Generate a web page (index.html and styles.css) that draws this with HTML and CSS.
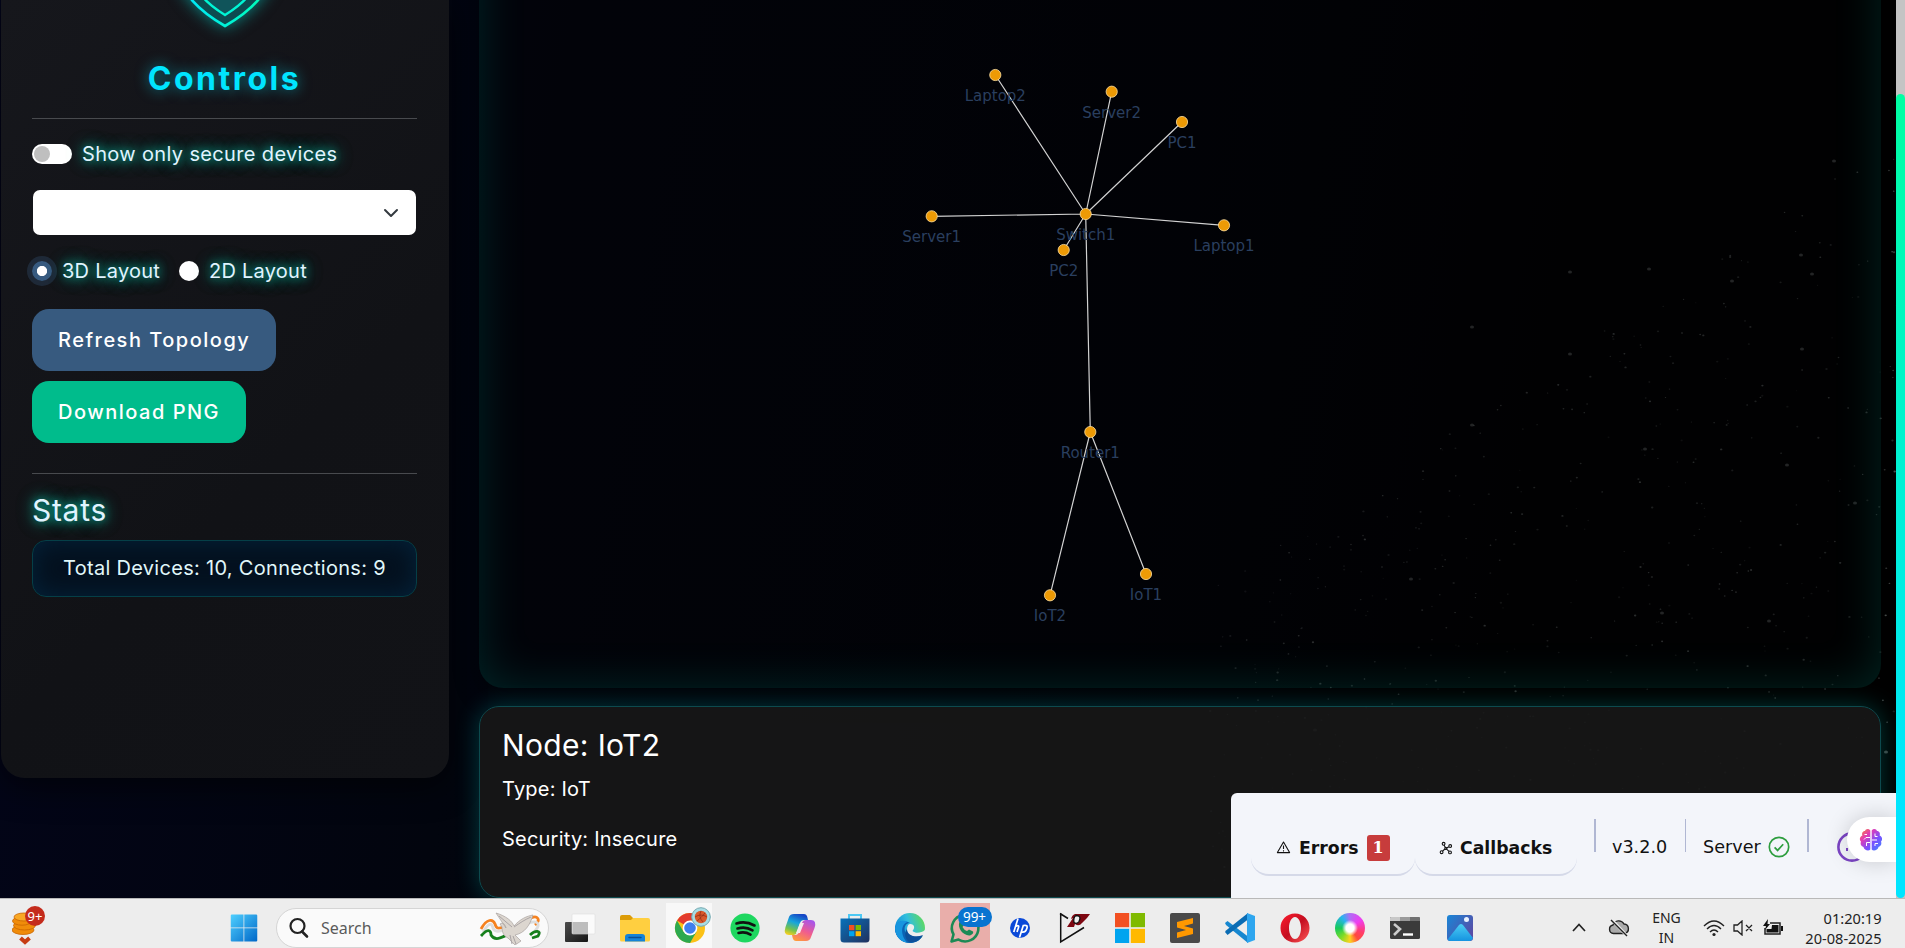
FILE: index.html
```html
<!DOCTYPE html>
<html lang="en">
<head>
<meta charset="utf-8">
<title>Network Topology</title>
<link rel="stylesheet" href="styles.css">
</head>
<body>
<div class="desktop">
  <div class="viewport">
    <svg class="stars" id="stars" viewBox="0 0 1905 898"></svg>

    <aside class="sidebar">
      <svg class="shield" width="100" height="62" viewBox="0 0 100 62">
        <defs><linearGradient id="shieldStroke" x1="0" x2="1"><stop offset="0" stop-color="#00e5ff"/><stop offset="1" stop-color="#00ffb0"/></linearGradient></defs>
        <path d="M4 -40 V-20 C5 0 24 19 50 34 C76 19 95 0 96 -20 V-40" transform="translate(0 -8)" fill="#0d4b50" stroke="url(#shieldStroke)" stroke-width="2.6"/>
        <path d="M14 -44 V-28 C18 -10 32 4 50 15 C68 4 82 -10 86 -28 V-44" fill="#10545a" stroke="#00f5d4" stroke-width="2.4"/>
      </svg>
      <h1 class="title"><span class="t-controls">Controls</span></h1>
      <hr class="rule">
      <label class="switch-row"><span class="switch"><span class="knob"></span></span><span class="glow t-switch">Show only secure devices</span></label>
      <div class="select">
        <svg width="16" height="16" viewBox="0 0 16 16"><path d="M2 5l6 6 6-6" fill="none" stroke="#343a40" stroke-width="2" stroke-linecap="round" stroke-linejoin="round"/></svg>
      </div>
      <div class="radios">
        <label class="radio-row first"><span class="radio checked"></span><span class="glow t-layout">3D Layout</span></label>
        <label class="radio-row"><span class="radio"></span><span class="glow t-layout">2D Layout</span></label>
      </div>
      <div class="btn refresh"><span class="t-refresh">Refresh Topology</span></div>
      <div class="btn download"><span class="t-download">Download PNG</span></div>
      <hr class="rule second">
      <h2 class="stats-title glow">Stats</h2>
      <div class="stats-box"><span class="t-total">Total Devices: 10, Connections: 9</span></div>
    </aside>

    <main class="content">
      <section class="graph-panel">
        <svg class="graph" width="1402" height="687" viewBox="479 0 1402 687">
          <g class="edges">
            <path d="M1085.7 214L995.3 75M1085.7 214L1111.7 91.7M1085.7 214L1182 122M1085.7 214L931.7 216.3M1085.7 214L1224 225.3M1085.7 214L1063.7 250M1085.7 214L1090.3 432M1090.3 432L1146 574M1090.3 432L1050 595.3"/>
          </g>
          <g class="labels">
            <text x="995.3" y="101">Laptop2</text><text x="1111.7" y="118">Server2</text><text x="1182" y="148">PC1</text>
            <text x="931.7" y="242">Server1</text><text x="1085.7" y="240">Switch1</text><text x="1224" y="251">Laptop1</text>
            <text x="1063.7" y="276">PC2</text><text x="1090.3" y="458">Router1</text><text x="1146" y="600">IoT1</text><text x="1050" y="621">IoT2</text>
          </g>
          <g class="nodes">
            <circle cx="995.3" cy="75" r="5.6"/><circle cx="1111.7" cy="91.7" r="5.6"/><circle cx="1182" cy="122" r="5.6"/>
            <circle cx="931.7" cy="216.3" r="5.6"/><circle cx="1085.7" cy="214" r="5.6"/><circle cx="1224" cy="225.3" r="5.6"/>
            <circle cx="1063.7" cy="250" r="5.6"/><circle cx="1090.3" cy="432" r="5.6"/><circle cx="1146" cy="574" r="5.6"/><circle cx="1050" cy="595.3" r="5.6"/>
          </g>
        </svg>
      </section>
      <section class="node-panel">
        <h2 class="t-node">Node: IoT2</h2>
        <p class="t-info">Type: IoT</p>
        <p class="t-info">Security: Insecure</p>
      </section>
    </main>

    <div class="scrollbar"><div class="thumb"></div></div>

    <div class="devtools">
      <div class="tab errors">
        <svg width="15" height="15" viewBox="0 0 15 15"><path d="M7.5 2L13.6 12.6H1.4Z" fill="none" stroke="#111" stroke-width="1.1" stroke-linejoin="round"/><path d="M7.5 5.5v3.6M7.5 10.2v1.2" stroke="#111" stroke-width="1.1"/></svg>
        <span>Errors</span><span class="count">1</span>
      </div>
      <div class="tab callbacks">
        <svg width="14" height="14" viewBox="0 0 14 14" fill="none" stroke="#111" stroke-width="1.1"><circle cx="4.600" cy="2.800" r="1.400"/><circle cx="11.200" cy="5" r="1.400"/><circle cx="2.600" cy="11.200" r="1.400"/><circle cx="11" cy="11.400" r="1.400"/><circle cx="6.800" cy="7.400" r="1"/><path d="M5.100 4.100L6.300 6.400M7.800 7l2-1.300M5.900 8L3.600 10.200M7.600 8.100l2.400 2.300"/></svg>
        <span>Callbacks</span>
      </div>
      <span class="sep s1"></span>
      <span class="version">v3.2.0</span>
      <span class="sep s2"></span>
      <span class="server">Server</span>
      <svg class="ok" width="22" height="22" viewBox="0 0 22 22"><circle cx="11" cy="11" r="9.7" fill="none" stroke="#2e9e3f" stroke-width="1.7"/><path d="M6.6 11.4l3 3 5.6-6.2" fill="none" stroke="#2e9e3f" stroke-width="1.7"/></svg>
      <span class="sep s3"></span>
      <svg class="dash" width="30" height="30" viewBox="0 0 30 30"><circle cx="15" cy="15" r="13.6" fill="none" stroke="#7b44c4" stroke-width="2.6"/><path d="M10 19v-3M12 8v3" stroke="#7b44c4" stroke-width="2"/></svg>
      <div class="brain">
        <svg width="24" height="24" viewBox="0 0 24 24">
          <defs><linearGradient id="brainFill" x1="0" y1="0" x2="1" y2="1"><stop offset="0" stop-color="#ff8a2a"/><stop offset=".3" stop-color="#e23cb4"/><stop offset=".62" stop-color="#7a50ff"/><stop offset="1" stop-color="#3c8cff"/></linearGradient></defs>
          <path fill="url(#brainFill)" d="M11.3 2.5C10 .3 6.500.5 6 3 3.500 3 2.500 5.500 3.400 7.500.5 8.500.2 12 2 13.600 1 16 2.200 18.500 4.500 18.900 5 22 9.500 23.800 11.300 21.500ZM12.700 2.500C14 .3 17.500.5 18 3c2.500 0 3.500 2.500 2.600 4.500 2.900 1 3.200 4.500 1.400 6.100 1 2.400-.2 4.900-2.500 5.300-.5 3.100-5 4.900-6.800 2.600Z"/>
          <path d="M8 6.500H5.500M11 9.500H7L5 11.500M11 14.500H7.500V18M16 5.500V8.500H18.500M13 12H18M16 18V15.500H19" fill="none" stroke="#fff" stroke-width="1"/>
        </svg>
      </div>
    </div>
  </div>

  <footer class="taskbar">
    <div class="widgets">
      <svg width="34" height="40" viewBox="0 0 34 40">
        <g fill="#f08c0a" stroke="#c96500" stroke-width=".8"><ellipse cx="11" cy="24" rx="11" ry="4.500"/><ellipse cx="12.500" cy="19.500" rx="11" ry="4.500"/><ellipse cx="10" cy="15" rx="9.500" ry="4.200"/><ellipse cx="12" cy="11" rx="10" ry="4" fill="#f9a825"/></g>
        <path d="M8.500 32l4.500 4 4.500-4" fill="none" stroke="#c63d13" stroke-width="4"/>
        <circle cx="23" cy="10" r="10" fill="#c42b1c"/>
        <text x="23" y="14.500" text-anchor="middle" font-size="13" fill="#fff">9+</text>
      </svg>
    </div>
    <svg class="start" width="30" height="30" viewBox="0 0 30 30"><defs><linearGradient id="winFill" x1="0" y1="0" x2="1" y2="1"><stop offset="0" stop-color="#4fd0ff"/><stop offset="1" stop-color="#0067c8"/></linearGradient></defs><path fill="url(#winFill)" d="M2 .5h12.500v14H.8V1.700A1.200 1.200 0 0 1 2 .5ZM15.300.5H28a1.200 1.200 0 0 1 1.200 1.200V14.500H15.300ZM.8 15.300H14.500V29.500H2A1.200 1.200 0 0 1 .8 28.300ZM15.300 15.300H29.200V28.300A1.200 1.200 0 0 1 28 29.500H15.300Z"/></svg>
    <div class="search">
      <svg width="20" height="22" viewBox="0 0 20 22"><circle cx="8.500" cy="9" r="7" fill="none" stroke="#222" stroke-width="2.200"/><path d="M13 14.500l5 5" stroke="#222" stroke-width="2.600" stroke-linecap="round"/></svg>
      <span>Search</span>
      <svg class="dove" width="64" height="34" viewBox="0 0 64 34">
        <g fill="none" stroke-width="2.800"><path d="M2 18C8 7 14 8 16 13C18 20 22 16 28 16M50 8c9-5 12 1 6 6" stroke="#f58220"/><path d="M4 21C10 11 13 12 14 17C16 23 24 19 30 18M50 12c9-3 12 1 6 8l6 2" stroke="#ddd"/><path d="M2 25C8 18 12 18 12 24C16 31 24 26 30 23M51 24c5-5 12-5 8 1l-6 2" stroke="#16801c"/></g>
        <path d="M21 13c3-2 5 0 6 4L17 2c10 3 16 8 18 13C41 8 48 5 54 4c-3 10-8 18-18 20l6 6-6 4-7-7c-5-2-6-7-6-11Z" fill="#dcd6cf" stroke="#a9a29f" stroke-width=".7"/><path d="M35 16c6-4 10-7 17-10M20 5l13 11M34 25l3 8M31 24l2 9" stroke="#aaa4a5" fill="none"/>
      </svg>
    </div>

    <div class="apps">
      <div class="app"><svg viewBox="0 0 30 30"><defs><linearGradient id="tv" x1="0" y1="0" x2="1" y2="1"><stop stop-color="#4c4c4c"/><stop offset="1" stop-color="#151515"/></linearGradient></defs><rect y="9" width="23" height="20" rx="1" fill="url(#tv)"/><rect x="7" y="1" width="23" height="20" rx="1" fill="#fff" fill-opacity=".75" stroke="#ddd" stroke-width=".6"/><path d="M8 9H23V21H8Z" fill="#bdbdbd"/></svg></div>
      <div class="app"><svg viewBox="0 0 30 30"><path d="M0 4a2 2 0 0 1 2-2h8l3 3v5H0Z" fill="#dc9c08"/><path d="M0 7h11l2-2h15a2 2 0 0 1 2 2v20a1.500 1.500 0 0 1-1.500 1.500h-27A1.500 1.500 0 0 1 0 27Z" fill="#ffcf40"/><path d="M5 28.500V24a3 3 0 0 1 3-3h14a3 3 0 0 1 3 3v4.500Z" fill="#1583d8"/><path d="M9 24.500h12" stroke="#0a4e94" stroke-width="1.400" stroke-linecap="round"/></svg></div>
      <div class="app active"><svg viewBox="0 0 30 30"><circle cx="15" cy="15" r="15" fill="#fbc116"/><path d="M15 15L2 7.500A15 15 0 0 1 28 7.500H15Z" fill="#e33b2e"/><path d="M2 7.500A15 15 0 0 0 15 30L21.500 18.750 8.500 18.750Z" fill="#2da94f"/><circle cx="15" cy="15" r="7.400" fill="#fff"/><circle cx="15" cy="15" r="5.800" fill="#3f7fed"/><circle cx="26" cy="4" r="9.300" fill="#a7dde4" stroke="#74a8b0" stroke-width="1"/><circle cx="26" cy="4" r="6.200" fill="#d8592a"/><path d="M20 4q6-4 12 0M22 8q4-3 8-8M26-2q-3 6 2 11" stroke="#8b2b16" stroke-width=".7" fill="none"/></svg></div>
      <div class="app"><svg viewBox="0 0 30 30"><circle cx="15" cy="15" r="14.600" fill="#1ed760"/><path d="M6.500 10.500q9-3 18 2M7.500 15.500q8-2.500 15 1.800M8.500 20q6.500-1.800 12 1.600" fill="none" stroke="#111" stroke-width="2.600" stroke-linecap="round"/></svg></div>
      <div class="app"><svg viewBox="0 0 30 30"><defs><linearGradient id="cpA" x1=".6" y1="0" x2=".2" y2="1"><stop stop-color="#1747c6"/><stop offset=".4" stop-color="#16a5dc"/><stop offset=".75" stop-color="#76c34b"/><stop offset="1" stop-color="#f8cf20"/></linearGradient><linearGradient id="cpB" x1=".7" y1="0" x2=".2" y2="1"><stop stop-color="#a956e8"/><stop offset=".5" stop-color="#f05d8e"/><stop offset="1" stop-color="#ff9c3a"/></linearGradient></defs><path d="M9 1h10q2.500 0 3.300 3L23 7h-4q-3 0-4 3l-3 9q-1 3-3 3H4q-6 0-3.500-8L4 4q1-3 5-3Z" fill="url(#cpA)"/><path d="M21 28H11q-2.500 0-3.300-3L7 22h3q3 0 4-3l3-9q1-3 4-3h5q6 0 3.500 8L26 24q-1 4-5 4Z" fill="url(#cpB)"/><path d="M15 10h4l-4 10h-4Z" fill="#f4e9ee"/></svg></div>
      <div class="app"><svg viewBox="0 0 30 30"><defs><linearGradient id="st" x1="0" y1="0" x2="1" y2="1"><stop stop-color="#0872bb"/><stop offset="1" stop-color="#21305d"/></linearGradient></defs><path d="M9 6V2h12v4" fill="none" stroke="#4cc8f4" stroke-width="2"/><path d="M.5 5.500h29V26a3.500 3.500 0 0 1-3.500 3.500H4A3.500 3.500 0 0 1 .5 26Z" fill="url(#st)"/><path d="M9 12h5.400v5.200H9Z" fill="#f25022"/><path d="M15.600 12H21v5.200h-5.400Z" fill="#7fba00"/><path d="M9 18.200h5.400v5H9Z" fill="#00a4ef"/><path d="M15.600 18.200H21v5h-5.400Z" fill="#ffb900"/></svg></div>
      <div class="app"><svg viewBox="0 0 30 30"><defs><linearGradient id="ed" x1="0" y1=".6" x2="1" y2=".2"><stop stop-color="#0c86d8"/><stop offset=".5" stop-color="#32bfdd"/><stop offset="1" stop-color="#62dc52"/></linearGradient></defs><circle cx="15" cy="15" r="15" fill="url(#ed)"/><path d="M0 15C2 7 10 7 15 10c-5 0-7 6-4 10s11 5 17 2c-3 6-8 8-13 8C7 30 0 24 0 15Z" fill="#0b63b4"/><path d="M0 15C1 8 8 6 13 9c-6 1-9 11-1 20.500C5 29 0 22 0 15Z" fill="#1795df"/><path d="M15 11c5 0 5 4 2.500 7 3 3 9 2 12.500-1v5c-6 4-18 2-18-5 0-3 1-6 3-6Z" fill="#eee"/><path d="M12 16c0 7 9 9 16 6-4 7-10 8-14 7-4-3-5-9-2-13Z" fill="#0d509a"/></svg></div>
      <div class="app alert"><svg viewBox="0 0 30 30"><path d="M1.500 28.500l2-7A13.300 13.300 0 1 1 8.500 26.600Z" fill="none" stroke="#1c8a55" stroke-width="2.600" stroke-linejoin="round"/><path d="M9.500 8.500q2-2 3.500 1.500l1 2-1.500 2q1.500 3 4.500 4l2-1.600 4 2c1 2-2 4-4 4-6-.4-12-7-9.500-13.900Z" fill="#1c8a55"/></svg><span class="badge">99+</span></div>
      <div class="app"><svg viewBox="0 0 30 30"><circle cx="15" cy="15" r="10" fill="#0b49d8"/><path d="M13 5.500L8.800 19M10.500 13.500q4-2 3 1l-1.500 4.500M14.500 24.500l3.800-12q5-1 3.500 3-1 4-5 3.500" fill="none" stroke="#fff" stroke-width="1.700"/></svg></div>
      <div class="app"><svg viewBox="0 0 30 30"><path d="M.700 0V29L24 14.500M0 .5l8 5" fill="none" stroke="#111" stroke-width="1.500"/><path d="M7 14h7l1-3q4 3 7-1l5-5 3-4H15q-3 1-4 5l2-1Z" fill="#7e0711"/><path d="M16 2.500q6 0 3 6-2 3-5 1-1-5 2-7Z" fill="#eee" stroke="#111" stroke-width="1.300"/></svg></div>
      <div class="app"><svg viewBox="0 0 30 30"><path fill="#f25022" d="M0 0h14.200v14.200H0Z"/><path fill="#7fba00" d="M15.800 0H30v14.200H15.800Z"/><path fill="#00a4ef" d="M0 15.800h14.200V30H0Z"/><path fill="#ffb900" d="M15.800 15.800H30V30H15.800Z"/></svg></div>
      <div class="app"><svg viewBox="0 0 30 30"><rect width="30" height="30" rx="2" fill="#4a4a4a"/><path d="M7 9l16-4v5.500L14 13l9 2.500V21L7 25v-5.500L16 17 7 14.500Z" fill="#ff9800"/></svg></div>
      <div class="app"><svg viewBox="0 0 30 30"><path d="M0 10l2.500-2L23 23.500V30L1 12Z" fill="#1687d0"/><path d="M0 19l2.500 3L23 6.500V0L1 17.500Z" fill="#0a6cb4"/><path d="M22 0l8 3v24l-8 3Z" fill="#2ea6ef"/></svg></div>
      <div class="app"><svg viewBox="0 0 30 30"><defs><linearGradient id="op" x1="0" y1="0" x2="1" y2="1"><stop stop-color="#ff1b2d"/><stop offset=".5" stop-color="#c40e20"/><stop offset="1" stop-color="#ff5a58"/></linearGradient></defs><path fill-rule="evenodd" fill="url(#op)" d="M15 .5C6.500.5.500 7 .500 15S6.500 29.500 15 29.500 29.500 23 29.500 15 23.500.5 15 .5ZM15 4c3.500 0 6 5 6 11s-2.500 11-6 11S9 21 9 15 11.500 4 15 4Z"/></svg></div>
      <div class="app"><div class="swirl"></div></div>
      <div class="app"><svg viewBox="0 0 30 30"><rect y="4" width="30" height="22" rx="1.500" fill="#3b3b3b"/><path d="M1 4h9v4H0V5Z" fill="#c8c8c8"/><path d="M10 4h10v4H10Z" fill="#9a9a9a"/><path d="M20 4h9l1 1v3H20Z" fill="#707070"/><path d="M4 11l6 5-6 6" fill="none" stroke="#ccc" stroke-width="2.600"/><path d="M13 21.500h10" stroke="#fff" stroke-width="2.400"/></svg></div>
      <div class="app"><svg viewBox="0 0 30 30"><defs><linearGradient id="ph" x1="0" y1="0" x2="1" y2=".7"><stop stop-color="#1886d7"/><stop offset="1" stop-color="#5a4ba5"/></linearGradient><linearGradient id="pm" x1="0" y1="0" x2="0" y2="1"><stop stop-color="#4bcdf5"/><stop offset="1" stop-color="#1593e0"/></linearGradient></defs><rect x="2" y="2" width="26" height="26" rx="3" fill="url(#ph)"/><path d="M3 26L14 12q2-2 4 0L28 25q-1 3-3 3H5q-2 0-2-2Z" fill="url(#pm)"/><circle cx="21.500" cy="6.500" r="2.500" fill="#e8f2ff"/></svg></div>
    </div>

    <div class="tray">
      <svg class="chev" width="14" height="9" viewBox="0 0 14 9"><path d="M1 8l6-6.500L13 8" fill="none" stroke="#222" stroke-width="1.700"/></svg>
      <svg class="cloud" width="22" height="18" viewBox="0 0 22 18"><path d="M5.500 14.500a4.300 4.300 0 0 1-.5-8.500 6 6 0 0 1 11-1 4.800 4.800 0 0 1 .5 9.500Z" fill="#aaa" stroke="#222" stroke-width="1.400"/><path d="M4 1l15 16" stroke="#eee" stroke-width="3"/><path d="M3 1l16 16" stroke="#222" stroke-width="1.500"/></svg>
      <div class="lang">ENG<br>IN</div>
      <svg class="wifi" width="22" height="18" viewBox="0 0 22 18"><g fill="none" stroke="#222" stroke-width="1.400"><path d="M1 7q10-10 20 0M4 10q7-7 14 0M7 13q4-4 8 0"/></g><circle cx="11" cy="15.500" r="1.600" fill="#222"/></svg>
      <svg class="vol" width="21" height="16" viewBox="0 0 21 16"><path d="M1 5h3.500L9 1v14l-4.500-4H1ZM13 5l6 6M19 5l-6 6" fill="none" stroke="#222" stroke-width="1.300"/></svg>
      <svg class="batt" width="21" height="18" viewBox="0 0 21 18"><path d="M7 4h10v11H2V9" fill="none" stroke="#222" stroke-width="1.500"/><path d="M9 6h6.500v7.500H3.500V10h5Z" fill="#111"/><path d="M18 7h2v5h-2ZM5 0L0 7h3L2 11l5-6H4.500Z" fill="#111"/></svg>
      <div class="clock">01:20:19<br>20-08-2025</div>
    </div>
  </footer>
</div>
<script src="stars.js"></script>
</body>
</html>
```
FILE: styles.css
```css
* { box-sizing: border-box; }
body { margin: 0; background: #02040b; font-family: Inter, "Noto Sans", sans-serif; overflow: hidden; }
h1, h2, p, hr { margin: 0; }
.desktop { width: 1905px; height: 948px; display: flex; flex-direction: column; }
.viewport { position: relative; height: 898px; display: flex; overflow: hidden; background: linear-gradient(100deg, #03051a 0%, #02050e 28%, #010207 65%, #000 80%); }
.stars { position: absolute; inset: 0; width: 1905px; height: 898px; }

.sidebar { position: relative; width: 448px; height: 778px; margin-left: 1px; padding: 0 32px 0 31px; border-radius: 0 0 24px 24px; background: linear-gradient(135deg, #16171c, #111216 60%, #121317); box-shadow: 0 8px 32px rgba(0,0,0,.6); color: #e0f7fa; display: flex; flex-direction: column; align-items: flex-start; flex: none; }
.shield { align-self: center; height: 62px; flex: none; overflow: visible; filter: drop-shadow(0 0 8px rgba(0,229,220,.55)); }
.title { align-self: center; height: 56px; line-height: 34px; font-size: 32px; font-weight: 700; color: #00e5ff; text-shadow: 0 0 14px rgba(0,229,255,.55); }
.rule { width: 385px; height: 1px; border: 0; background: #484a4e; }
.glow { text-shadow: 0 0 8px rgba(0,240,220,.6), 0 0 16px rgba(0,240,190,.6), 0 0 20px rgba(0,240,190,.35); color: #e0f4ff; }
.switch-row { display: flex; align-items: center; margin-top: 23px; height: 24px; font-size: 20px; gap: 10px; white-space: nowrap; }
.switch-row .glow, .radios .glow { padding-bottom: 1px; }
.switch { width: 40px; height: 20px; border-radius: 10px; background: #fff; padding: 2px; }
.knob { display: block; width: 16px; height: 16px; border-radius: 50%; background: #bfbfbf; }
.select { width: 383px; height: 45px; margin: 24px 0 0 1px; border-radius: 7px; background: #fff; display: flex; align-items: center; justify-content: flex-end; padding-right: 17px; }
.radios { display: flex; height: 24px; margin-top: 24px; font-size: 20px; white-space: nowrap; }
.radio-row { display: flex; align-items: center; gap: 10px; }
.radio-row.first { width: 147px; }
.radio { width: 20px; height: 20px; border-radius: 50%; background: #fff; flex: none; }
.radio.checked { background: radial-gradient(circle, #fff 4.700px, #375a7f 5.500px); box-shadow: 0 0 0 5px rgba(55,90,127,.3); }
.btn { height: 62px; border-radius: 17px; padding: 0 0 1px 26px; display: flex; align-items: center; color: #fff; font-size: 20px; font-weight: 500; white-space: nowrap; }
.refresh { width: 244px; margin-top: 26px; background: #375a7f; }
.download { width: 214px; margin-top: 10px; background: #00bc8c; }
.rule.second { margin-top: 30px; }
.stats-title { margin-top: 18px; height: 37px; line-height: 37px; font-size: 30px; font-weight: 400; letter-spacing: .7px; }
.stats-box { width: 385px; height: 57px; margin-top: 11px; border: 1px solid #053f47; border-radius: 14px; background: #04111f; box-shadow: inset 0 0 24px #04233b; display: flex; align-items: center; padding-left: 30px; font-size: 20px; padding-bottom: 2px; white-space: nowrap; }

.content { position: relative; width: 1402px; margin: -80px 0 0 30px; display: flex; flex-direction: column; gap: 18px; flex: none; }
.graph-panel { height: 768px; flex: none; padding-top: 80px; border-radius: 0 0 24px 24px; background: rgba(2,3,5,.45); box-shadow: inset 0 0 48px rgba(0,229,200,.16), 0 8px 24px rgba(0,0,0,.35); overflow: hidden; }
.graph { display: block; }
.edges path { fill: none; stroke: #d2d2d2; stroke-width: 1.200; }
.labels text { font: 15px "DejaVu Sans", sans-serif; fill: #2a3f5f; text-anchor: middle; }
.nodes circle { fill: #ed9a05; stroke: #ffe0a0; stroke-width: .8; }
.node-panel { height: 192px; flex: none; border: 1px solid #0d4a4e; border-radius: 20px; background: rgba(23,23,23,.9); box-shadow: 0 0 24px rgba(0,229,220,.24); padding: 19px 22px; color: #fff; }
.node-panel h2 { height: 40px; line-height: 38px; font-size: 30px; font-weight: 400; }
.node-panel p { height: 50px; line-height: 46px; font-size: 20px; }

.t-controls { letter-spacing: 2.500px; }
.t-switch { letter-spacing: .35px; }
.t-layout { letter-spacing: .25px; }
.t-refresh, .t-download { letter-spacing: 1.500px; }
.t-total { letter-spacing: .3px; }
.t-node { letter-spacing: .35px; }
.t-info { letter-spacing: .22px; }

.scrollbar { margin-left: 15px; width: 9px; height: 898px; background: #c4c4c4; padding-top: 94px; flex: none; position: relative; }
.thumb { height: 804px; border-radius: 5px; background: linear-gradient(#00ffa3, #00e5ff 90%); }

.devtools { position: absolute; right: 9px; bottom: 0; width: 665px; height: 105px; border-radius: 6px 0 0 0; background: #f3f5fa; overflow: hidden; display: flex; align-items: flex-start; padding: 26px 0 0 20px; font: 17.600px "DejaVu Sans", Verdana, sans-serif; color: #111; }
.tab { height: 57px; padding-top: 2px; border-bottom: 2px solid #d5d9e8; border-radius: 0 0 18px 18px; display: flex; align-items: center; font-weight: 700; font-size: 17.300px; flex: none; }
.errors { width: 164px; padding-left: 25px; }
.errors svg { margin-right: 8px; }
.callbacks { width: 162px; padding-left: 24px; }
.callbacks svg { margin-right: 7px; }
.count { margin-left: 8px; width: 23px; height: 26px; border-radius: 3px; background: #c73c3c; color: #fff; text-align: center; font: 700 16px/26px "DejaVu Serif", serif; }
.sep { width: 2px; height: 33px; background: #b0b7d3; flex: none; }
.s1 { margin-left: 17px; }
.s2 { width: 1px; }
.version, .server { line-height: 57px; flex: none; }
.version { width: 89px; padding-left: 16px; }
.server { width: 82px; padding-left: 17px; }
.ok { margin-top: 17px; flex: none; }
.s3 { margin-left: 17px; }
.dash { margin: 13px 0 0 28px; flex: none; }
.brain { position: absolute; right: 0; top: 24px; width: 49px; height: 45px; border-radius: 23px 0 0 23px; background: #fff; box-shadow: 0 0 22px rgba(0,0,0,.18); display: flex; align-items: center; padding-left: 12px; }

.taskbar { height: 50px; background: #ededed; border-top: 1px solid #b9b9b9; display: flex; font-family: "Noto Sans", "Open Sans", sans-serif; color: #222; }
.widgets { width: 230px; padding: 7px 0 0 12px; flex: none; height: 49px; overflow: hidden; }
.start { margin-top: 14px; flex: none; width: 28px; }
.search { margin: 9px 0 0 18px; width: 273px; height: 40px; border: 1px solid #d5d5d5; border-radius: 20px; background: #fafafa; display: flex; align-items: center; padding-left: 12px; font-size: 16px; color: #5a5a5a; flex: none; }
.search span { margin-left: 12px; width: 158px; }
.apps { display: flex; margin-left: 3.500px; flex: none; }
.app { position: relative; width: 55px; height: 49px; padding: 14px 0 0 12.500px; }
.app svg { width: 30px; height: 30px; display: block; overflow: visible; }
.swirl { width: 30px; height: 30px; border-radius: 50%; background: radial-gradient(circle, #fff 4px, rgba(255,255,255,0) 8px), conic-gradient(#b06cf5, #f03cf0 15%, #ff3c6e 30%, #ff4a3c 40%, #ffd21e 50%, #7bdc28 62%, #16c95c 75%, #28b4f0 90%, #b06cf5); }
.active { background: linear-gradient(#f8f8f8, #f8f8f8) no-repeat 3px 4px / 46px 50px; }
.alert { background: linear-gradient(#e9aeaa, #e9aeaa) no-repeat 2.500px 4px / 50px 50px; }
.badge { position: absolute; left: 20px; top: 8px; width: 34px; height: 20px; border-radius: 10px; background: #0873d0; color: #fff; font-size: 13.500px; line-height: 20px; text-align: center; }
.tray { display: flex; align-items: center; margin-left: 84px; flex: none; height: 49px; padding-top: 8px; font-size: 14.600px; line-height: 20px; white-space: nowrap; }
.tray svg { flex: none; }
.cloud { margin-left: 22px; }
.lang { width: 40px; margin-left: 17px; text-align: center; font-size: 14px; }
.wifi { margin-left: 16px; }
.vol { margin-left: 8px; }
.batt { margin-left: 9px; }
.clock { width: 98px; text-align: right; }
```
FILE: stars.js
```js
const svg = document.getElementById("stars");
const NS = "http://www.w3.org/2000/svg";
let seed = 41;
function rand() {
  seed = (seed * 16807) % 2147483647;
  return seed / 2147483647;
}
function star(x, y, r, opacity) {
  const dot = document.createElementNS(NS, "ellipse");
  dot.setAttribute("cx", x);
  dot.setAttribute("cy", y);
  dot.setAttribute("rx", r);
  dot.setAttribute("ry", r * 0.8);
  dot.setAttribute("fill", "#9aa3a0");
  dot.setAttribute("fill-opacity", opacity);
  svg.appendChild(dot);
}
for (let i = 0; i < 620; i++) {
  const x = 1210 + rand() * 690;
  const edge = 590 - (x - 1210) * 0.66;
  const y = edge + rand() * (898 - edge);
  star(x, y, 0.6 + rand() * 0.6, 0.15 + rand() * 0.35);
}
[[1472, 327], [1570, 272], [1649, 269], [1645, 449], [1834, 161], [1855, 503], [1769, 621], [1801, 255], [1812, 274], [1732, 281], [1787, 465], [1411, 579], [1662, 613], [1886, 752], [1315, 730], [1802, 349], [1472, 425], [1570, 354]]
  .forEach(([x, y]) => star(x, y, 2, 0.4));
```
